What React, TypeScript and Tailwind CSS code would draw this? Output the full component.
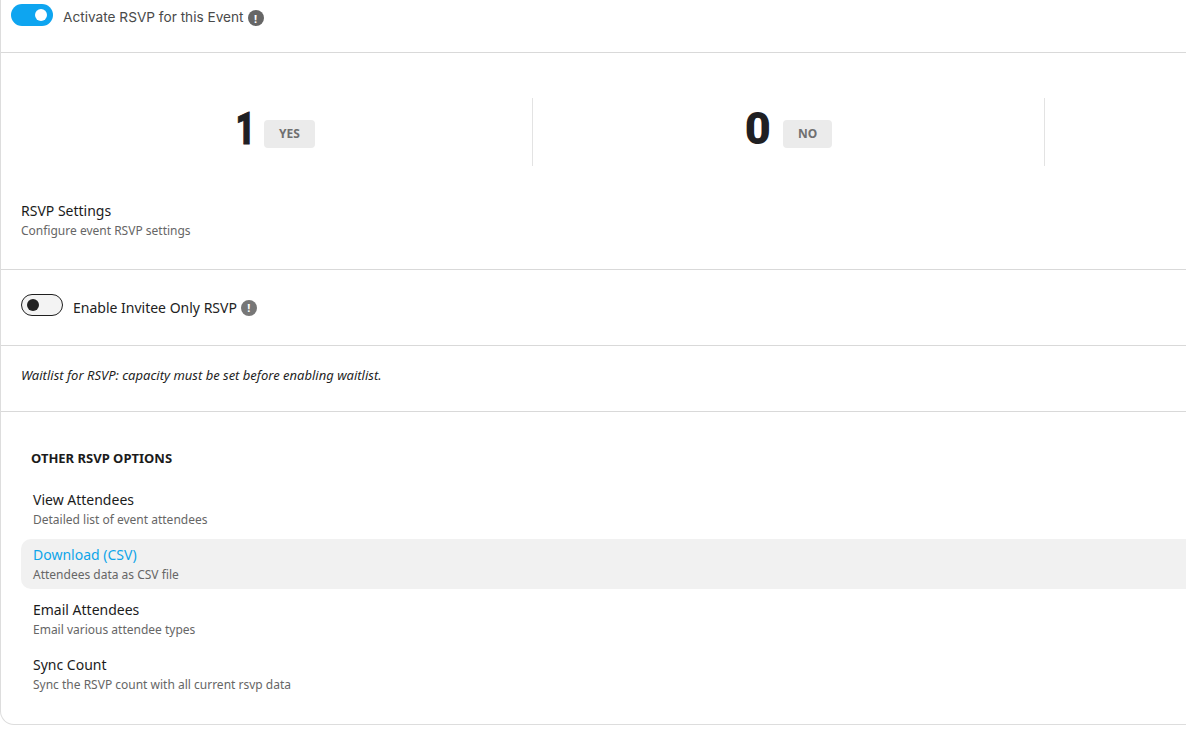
import React from "react";

function Info({ className }: { className: string }) {
  return (
    <span className={`ml-[4px] flex h-4 w-4 items-center justify-center rounded-full text-[11px] font-bold leading-none text-white ${className}`}>!</span>
  );
}

function Stat({ value, label, narrow, last }: { value?: string; label?: string; narrow?: boolean; last?: boolean }) {
  return (
    <div className={`flex h-[68px] w-[512px] shrink-0 items-center justify-center gap-[12px] ${last ? "" : "border-r border-[#e3e3e3]"}`}>
      {value && (
        <span className={`mb-[7px] flex justify-end font-['Roboto',sans-serif] text-[45px] font-black leading-[52px] text-[#1f2023] ${narrow ? "w-[14px]" : ""}`}>
          <span className={narrow ? "-mr-[3px] origin-right scale-x-[0.75] [-webkit-text-stroke:1px_#1f2023]" : ""}>{value}</span>
        </span>
      )}
      {label && (
        <span className="mt-[3px] flex h-7 items-center rounded-[4px] bg-[#ebebeb] px-[15px] font-['Noto_Sans',sans-serif] text-xs font-bold text-[#707070]">{label}</span>
      )}
    </div>
  );
}

function Option({ title, sub, active }: { title: string; sub: string; active?: boolean }) {
  return (
    <div className={`h-[50px] rounded-l-[10px] pl-3 pt-[5px] ${active ? "bg-[#f1f1f1]" : ""}`}>
      <div className={`text-sm leading-[22px] ${active ? "text-[#0ea5e9]" : "text-[#1b1b1b]"}`}>{title}</div>
      <div className="text-xs leading-[18px] text-[#666666]">{sub}</div>
    </div>
  );
}

export default function App() {
  return (
    <div className="h-[749px] w-[1186px] overflow-hidden bg-white font-['Noto_Sans',sans-serif]">
      <div className="h-[725px] w-[1300px] rounded-bl-[14px] border-b border-l border-[#dddddd]">
        <div className="flex h-[53px] items-start border-b border-[#d9d9d9] pl-[10px] pt-[4px]">
          <div className="flex h-[22px] w-[42px] items-center justify-end rounded-full bg-[#0ea5f0] pr-[6px]">
            <span className="h-[12px] w-[12px] rounded-full bg-white" />
          </div>
          <span className="ml-[10px] mt-[3px] font-['Inter',sans-serif] text-[13.65px] leading-[20px] text-[#4a4a4a]">Activate RSVP for this Event</span>
          <Info className="mt-[6px] bg-[#666666]" />
        </div>

        <div className="flex pl-[20px] pt-[45px]">
          <Stat value="1" label="YES" narrow />
          <Stat value="0" label="NO" />
          <Stat last />
        </div>

        <div className="h-[104px] border-b border-[#d9d9d9] pl-[20px] pt-[34px]">
          <div className="text-sm leading-[22px] text-[#1b1b1b]">RSVP Settings</div>
          <div className="text-xs leading-[18px] text-[#666666]">Configure event RSVP settings</div>
        </div>

        <div className="flex h-[76px] items-center border-b border-[#d9d9d9] pl-[20px]">
          <div className="mb-[6px] flex h-[22px] w-[42px] items-center rounded-full border border-[#1f1f1f] bg-[#f3f3f3] pl-[5px]">
            <span className="h-[12px] w-[12px] rounded-full bg-[#222222]" />
          </div>
          <span className="ml-[10px] text-sm text-[#222222]">Enable Invitee Only RSVP</span>
          <Info className="bg-[#777777]" />
        </div>

        <div className="flex h-[66px] items-center border-b border-[#d9d9d9] pb-[5px] pl-[20px] text-[13px] italic text-[#1f1f1f]">
          Waitlist for RSVP: capacity must be set before enabling waitlist.
        </div>

        <div className="pl-[20px] pt-[37px]">
          <div className="pb-[17px] pl-[10px] text-[13px] font-bold leading-[18px] text-[#1b1b1b]">OTHER RSVP OPTIONS</div>
          <div className="flex flex-col gap-[5px]">
            <Option title="View Attendees" sub="Detailed list of event attendees" />
            <Option title="Download (CSV)" sub="Attendees data as CSV file" active />
            <Option title="Email Attendees" sub="Email various attendee types" />
            <Option title="Sync Count" sub="Sync the RSVP count with all current rsvp data" />
          </div>
        </div>
      </div>
    </div>
  );
}
